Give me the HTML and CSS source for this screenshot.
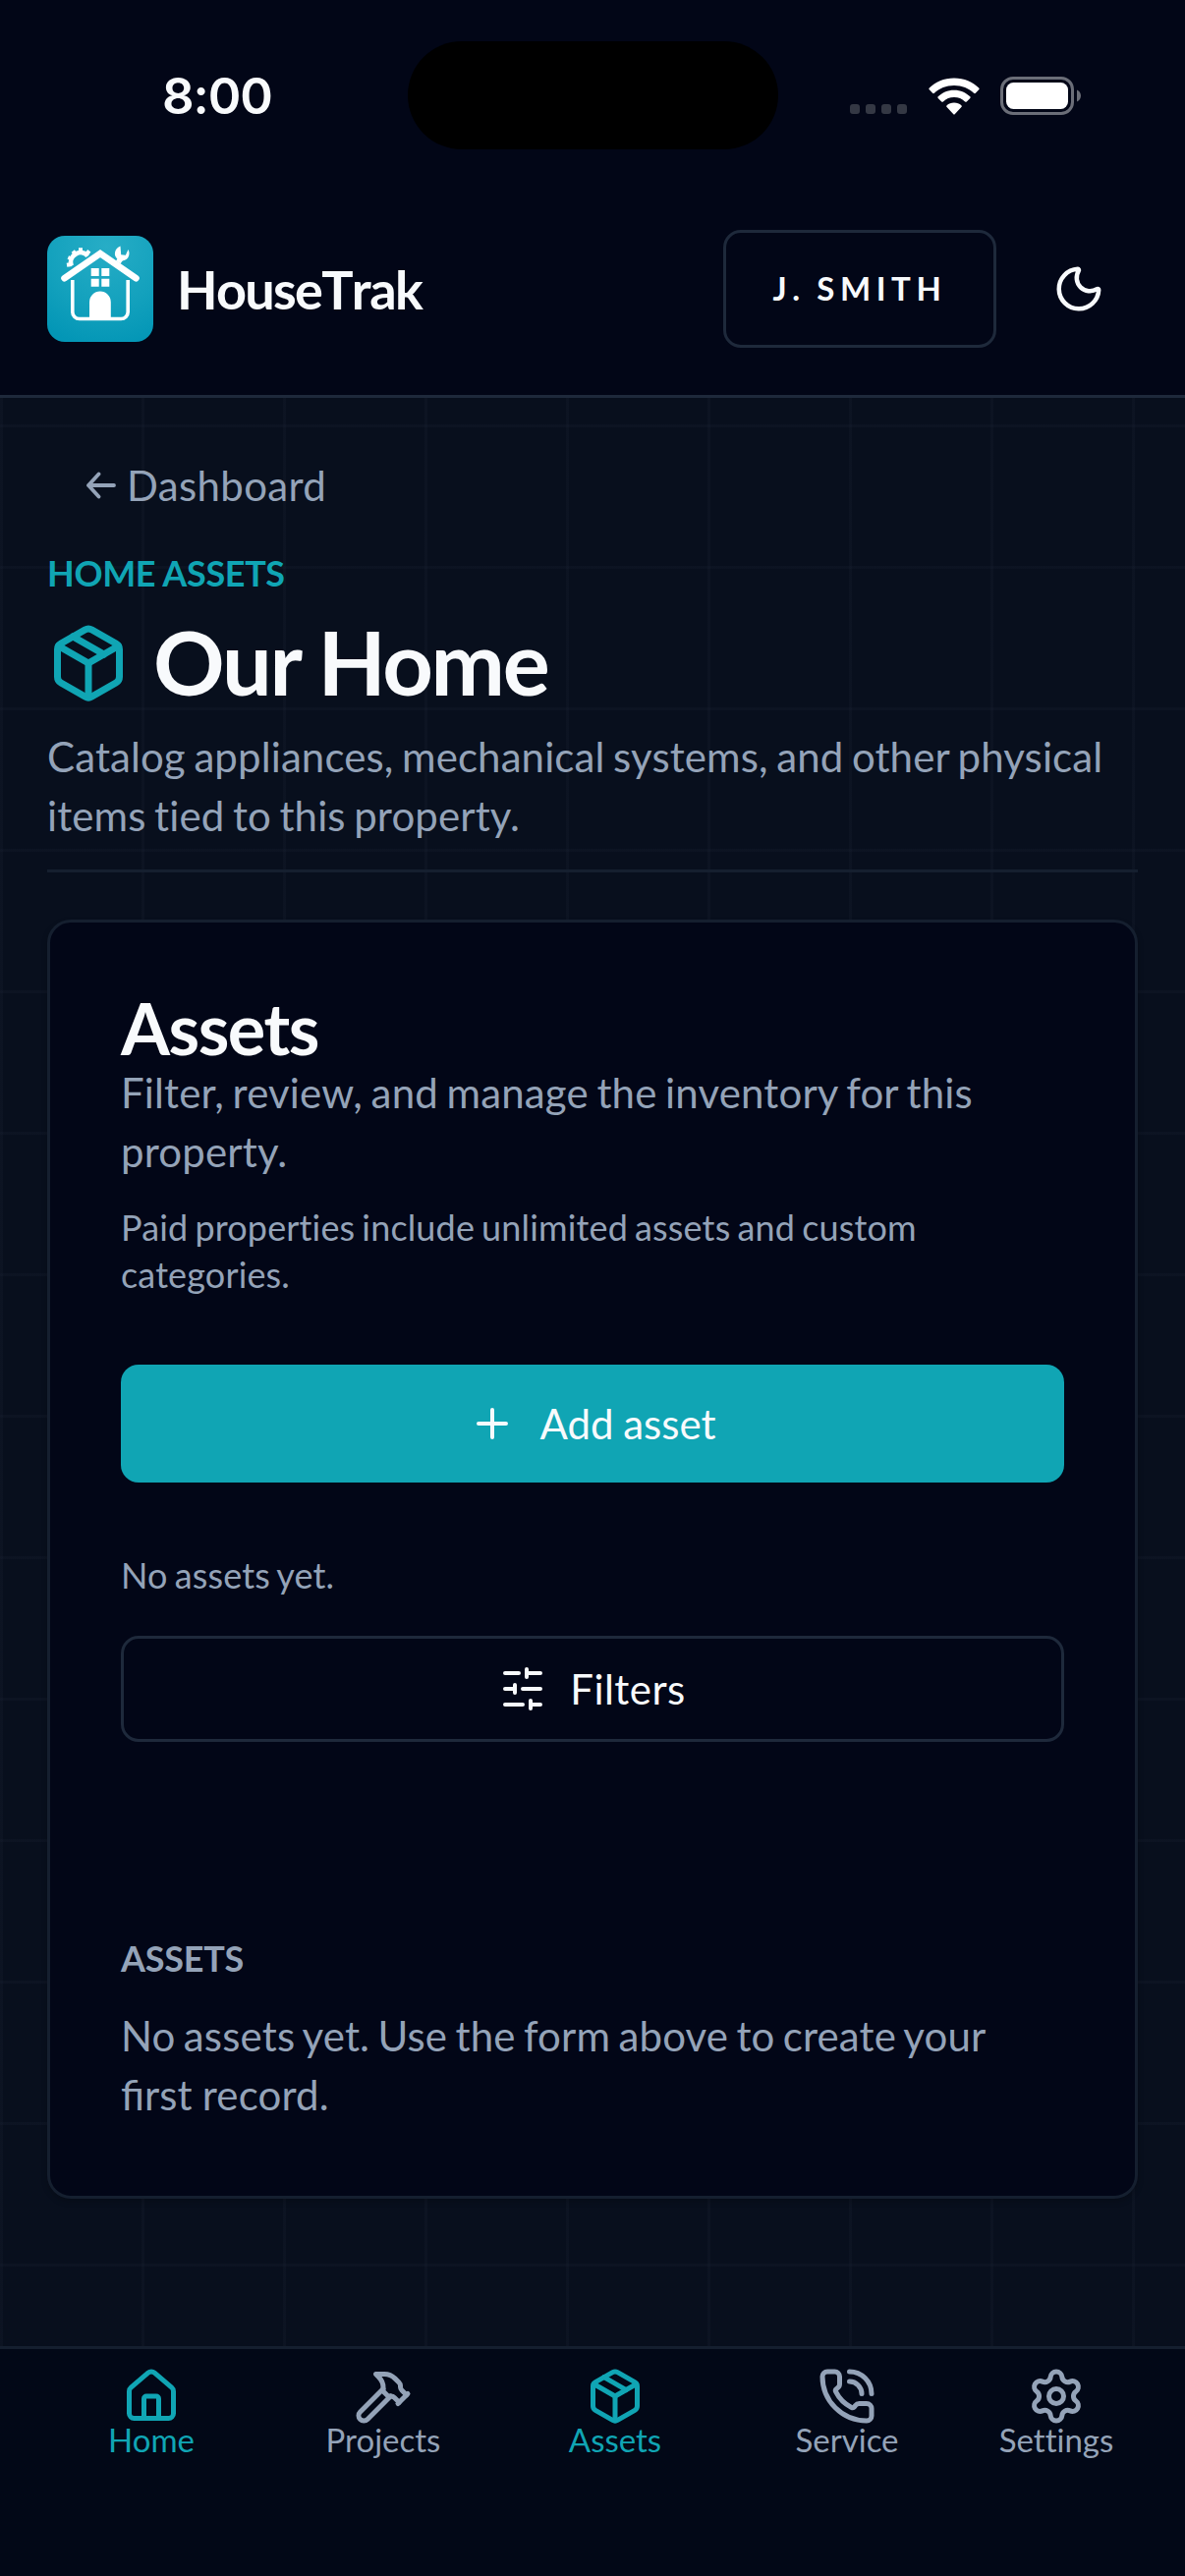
FILE: index.html
```html
<!DOCTYPE html>
<html lang="en">
<head>
<meta charset="utf-8">
<title>HouseTrak – Our Home</title>
<link rel="stylesheet" href="styles.css">
</head>
<body>
<div class="app">
  <header class="top">
    <div class="status">
      <span class="time">8:00</span>
      <span class="island"></span>
      <div class="indicators">
        <span class="dots"><i></i><i></i><i></i><i></i></span>
        <svg class="wifi" width="52" height="38" viewBox="0 0 52 38" fill="#fff">
          <path d="M26 .5C36.200 .5 45.500 4.500 51.200 10.600a1.200 1.200 0 0 1 0 1.700l-3.300 3.400a1.300 1.300 0 0 1-1.800 0C41 10.700 34 7.900 26 7.900S11 10.700 5.900 15.700a1.300 1.300 0 0 1-1.800 0L.8 12.300a1.200 1.200 0 0 1 0-1.700C6.500 4.500 15.800 .5 26 .5Z"/>
          <path d="M26 12.700c6.600 0 12.300 2.600 16.300 6.600a1.200 1.200 0 0 1 0 1.700l-3.500 3.500a1.300 1.300 0 0 1-1.700 0A16 16 0 0 0 26 20.100a16 16 0 0 0-11.100 4.400 1.300 1.300 0 0 1-1.700 0L9.700 21a1.200 1.200 0 0 1 0-1.700C13.700 15.300 19.400 12.700 26 12.700Z"/>
          <path d="M26 25.500c2.900 0 5.500 1.100 7.400 2.700a1.200 1.200 0 0 1 0 1.800l-6.500 6.900a1.200 1.200 0 0 1-1.800 0L18.600 30a1.200 1.200 0 0 1 0-1.800c1.900-1.600 4.500-2.700 7.400-2.700Z"/>
        </svg>
        <svg class="battery" width="83" height="39" viewBox="0 0 83 39">
          <rect x="1.500" y="1.500" width="72" height="36" rx="11.500" fill="none" stroke="#6b6e78" stroke-width="3"/>
          <rect x="6" y="6" width="63" height="27" rx="7.500" fill="#fff"/>
          <path d="M78 13.500c2.300.9 4 3.200 4 6s-1.700 5.100-4 6Z" fill="#6b6e78"/>
        </svg>
      </div>
    </div>
    <div class="bar">
      <div class="brand">
        <svg class="logo" viewBox="0 0 108 108">
          <defs>
            <radialGradient id="tile" cx="0.56" cy="0.1" r="0.95">
              <stop offset="0" stop-color="#27adc6"/>
              <stop offset="0.6" stop-color="#13a1bd"/>
              <stop offset="1" stop-color="#0396b6"/>
            </radialGradient>
          </defs>
          <rect width="108" height="108" rx="18" fill="url(#tile)"/>
          <g fill="none" stroke="#fff">
            <path d="M17.500 43.200 54 18l36.500 25.200" stroke-width="6.600" stroke-linecap="round"/>
            <path d="M25.800 45v32.500a7 7 0 0 0 7 7h42.400a7 7 0 0 0 7-7V45" stroke-width="3.600"/>
            <path d="M24.600 30.500A10 10 0 0 1 41.300 20.300" stroke-width="4.800"/>
            <path d="M20 29.800l5-.8M21.300 22l5 2M26.300 15.500l3.200 4.500M34 12.300v5M42.800 15.300l-3.300 4.500" stroke-width="4"/>
            <path d="M76 21.500l-3.700 5.500" stroke-width="5.500"/>
          </g>
          <path d="M74.500 10.500c-4.500 1.700-6.800 6.500-5 10.600 1.400 3.400 5.800 5.400 9 4 4.300-1.300 6.400-6.400 4-11.100l-2.700 5.700-4.600-.4Z" fill="#fff"/>
          <path d="M44.700 33h8v8h-8zM55.300 33h8v8h-8zM44.700 43.700h8v8h-8zM55.300 43.700h8v8h-8zM43 85V67.500a10.900 11 0 0 1 21.800 0V85Z" fill="#fff"/>
        </svg>
        <span class="brand-name">HouseTrak</span>
      </div>
      <div class="actions">
        <button class="user">J. SMITH</button>
        <button class="theme" aria-label="Theme"><svg class="ico i54" viewBox="0 0 24 24"><path d="M20.985 12.486a9 9 0 1 1-9.473-9.472c.405-.022.617.46.402.803a6 6 0 0 0 8.268 8.268c.344-.215.825-.004.803.401"/></svg></button>
      </div>
    </div>
  </header>

  <main class="main">
    <a class="back">
      <svg width="32" height="28" viewBox="0 0 32 28" class="arrow"><path d="M29 14H3M13.500 2.500 3 14l10.500 11.500"/></svg>
      <span>Dashboard</span>
    </a>
    <div class="page-head">
      <p class="eyebrow">HOME ASSETS</p>
      <div class="title-row">
        <svg class="ico i84" viewBox="0 0 24 24"><use href="#pkg"/></svg>
        <h1>Our Home</h1>
      </div>
      <p class="lead">Catalog appliances, mechanical systems, and other physical items tied to this property.</p>
    </div>
    <section class="card">
      <h2>Assets</h2>
      <p class="body">Filter, review, and manage the inventory for this property.</p>
      <p class="note">Paid properties include unlimited assets and custom categories.</p>
      <button class="btn primary"><svg class="ico i48" viewBox="0 0 24 24"><path d="M5 12h14M12 5v14"/></svg><span>Add asset</span></button>
      <p class="count">No assets yet.</p>
      <button class="btn outline"><svg class="ico i48" viewBox="0 0 24 24"><path d="M21 4h-7M10 4H3M21 12h-9M8 12H3M21 20h-5M12 20H3M14 2v4M8 10v4M16 18v4"/></svg><span>Filters</span></button>
      <h3>ASSETS</h3>
      <p class="body empty">No assets yet. Use the form above to create your <span class="liga">first</span> record.</p>
    </section>
  </main>

  <nav class="tabs">
    <a class="tab on"><svg class="ico i60" viewBox="0 0 24 24"><path d="M15 21v-8a1 1 0 0 0-1-1h-4a1 1 0 0 0-1 1v8"/><path d="M3 10a2 2 0 0 1 .709-1.528l7-5.999a2 2 0 0 1 2.582 0l7 5.999A2 2 0 0 1 21 10v9a2 2 0 0 1-2 2H5a2 2 0 0 1-2-2z"/></svg><span>Home</span></a>
    <a class="tab"><svg class="ico i60" viewBox="0 0 24 24"><path d="m15 12-9.373 9.373a1 1 0 0 1-3.001-3L12 9"/><path d="m18 15 4-4"/><path d="m21.500 11.500-1.914-1.914A2 2 0 0 1 19 8.172v-.344a2 2 0 0 0-.586-1.414l-1.657-1.657A6 6 0 0 0 12.516 3H9l1.243 1.243A6 6 0 0 1 12 8.485V10l2 2h1.172a2 2 0 0 1 1.414.586L18.500 14.500"/></svg><span>Projects</span></a>
    <a class="tab on"><svg class="ico i60" viewBox="0 0 24 24"><g id="pkg"><path d="M11 21.730a2 2 0 0 0 2 0l7-4A2 2 0 0 0 21 16V8a2 2 0 0 0-1-1.730l-7-4a2 2 0 0 0-2 0l-7 4A2 2 0 0 0 3 8v8a2 2 0 0 0 1 1.730z"/><path d="M12 22V12"/><path d="M3.290 7 12 12l8.710-5"/><path d="m7.500 4.270 9 5.150"/></g></svg><span>Assets</span></a>
    <a class="tab"><svg class="ico i60" viewBox="0 0 24 24"><path d="M13 2a9 9 0 0 1 9 9"/><path d="M13 6a5 5 0 0 1 5 5"/><path d="M13.832 16.568a1 1 0 0 0 1.213-.303l.355-.465A2 2 0 0 1 17 15h3a2 2 0 0 1 2 2v3a2 2 0 0 1-2 2A18 18 0 0 1 2 4a2 2 0 0 1 2-2h3a2 2 0 0 1 2 2v3a2 2 0 0 1-.8 1.600l-.468.351a1 1 0 0 0-.292 1.233 14 14 0 0 0 6.392 6.384"/></svg><span>Service</span></a>
    <a class="tab"><svg class="ico i60" viewBox="0 0 24 24"><path d="M9.671 4.136a2.340 2.340 0 0 1 4.659 0 2.340 2.340 0 0 0 3.319 1.915 2.340 2.340 0 0 1 2.330 4.033 2.340 2.340 0 0 0 0 3.831 2.340 2.340 0 0 1-2.330 4.033 2.340 2.340 0 0 0-3.319 1.915 2.340 2.340 0 0 1-4.659 0 2.340 2.340 0 0 0-3.320-1.915 2.340 2.340 0 0 1-2.330-4.033 2.340 2.340 0 0 0 0-3.831A2.340 2.340 0 0 1 6.350 6.051a2.340 2.340 0 0 0 3.319-1.915"/><circle cx="12" cy="12" r="3"/></svg><span>Settings</span></a>
  </nav>
</div>
</body>
</html>
```
FILE: styles.css
```css
* { box-sizing: border-box; margin: 0; padding: 0; }
:root {
  --bg: #020617;
  --fg: #f8fafc;
  --muted: #94a3b8;
  --line: #1e293b;
  --line-soft: #151f2f;
  --teal: #10a5b4;
}
body {
  width: 1206px;
  height: 2622px;
  overflow: hidden;
  background: var(--bg);
  color: var(--fg);
  font-family: Lato, "Liberation Sans", sans-serif;
  font-size: 42px;
  line-height: 60px;
  font-variant-ligatures: none;
}
button { font: inherit; color: inherit; background: none; border: 0; }
h1, h2, h3 { font-weight: 700; }
.liga { font-variant-ligatures: common-ligatures; letter-spacing: 0; margin-right: 2px; }

.app {
  display: flex;
  flex-direction: column;
  height: 2622px;
  background-color: #080f1d;
  background-image:
    linear-gradient(to right, rgba(40, 48, 66, .14) 3px, transparent 3px),
    linear-gradient(to bottom, rgba(40, 48, 66, .14) 3px, transparent 3px);
  background-size: 144px 144px;
}

.ico { fill: none; stroke: currentColor; stroke-width: 2; stroke-linecap: round; stroke-linejoin: round; flex: none; display: block; }
.i48 { width: 48px; height: 48px; }
.i54 { width: 54px; height: 54px; }
.i60 { width: 60px; height: 60px; }
.i84 { width: 84px; height: 84px; margin-top: 4px; }

.top { height: 405px; flex: none; background: var(--bg); border-bottom: 3px solid var(--line); }
.status {
  height: 186px;
  padding-top: 42px;
  display: grid;
  grid-template-columns: 415px 377px 1fr;
  grid-template-rows: 110px;
}
.time { font: 600 51px/112px Inter, sans-serif; letter-spacing: -1.100px; padding-left: 165px; }
.island { background: #000; border-radius: 55px; }
.indicators { display: flex; padding-left: 73px; padding-top: 36px; }
.dots { display: flex; gap: 6px; padding-top: 28px; margin-right: 22px; }
.dots i { width: 10px; height: 10px; border-radius: 3px; background: #343844; }
.wifi { margin-top: 1px; margin-right: 21px; }

.bar { display: flex; justify-content: space-between; align-items: center; height: 216px; padding: 0 48px; }
.brand { display: flex; align-items: center; gap: 24px; }
.logo { width: 108px; height: 108px; display: block; }
.brand-name { font-size: 54px; font-weight: 700; letter-spacing: -1.700px; font-kerning: none; padding-top: 2px; }
.actions { display: flex; gap: 24px; }
.user {
  width: 278px;
  height: 120px;
  border: 3px solid var(--line);
  border-radius: 18px;
  font-size: 33px;
  font-weight: 700;
  letter-spacing: 5.600px;
  word-spacing: -2px;
  padding-bottom: 2px;
  white-space: nowrap;
}
.theme { width: 120px; height: 120px; display: flex; align-items: center; justify-content: center; }

.main { flex: 1; padding: 0 48px; }
.back { display: flex; align-items: center; gap: 10px; padding: 59px 0 0 39px; color: var(--muted); letter-spacing: .350px; }
.arrow { fill: none; stroke: currentColor; stroke-width: 3.800; stroke-linecap: round; stroke-linejoin: round; }
.page-head { margin-top: 35px; border-bottom: 3px solid var(--line-soft); padding-bottom: 25px; }
.eyebrow { color: var(--teal); font-size: 36px; line-height: 48px; font-weight: 700; letter-spacing: -.350px; }
.title-row { display: flex; align-items: center; gap: 24px; margin: 12px 0 13px; color: var(--teal); }
h1 { font-size: 90px; line-height: 108px; letter-spacing: -2.250px; color: var(--fg); }
.lead, .body, .note, .count, h3 { color: var(--muted); }
.body, .note, .count { letter-spacing: .150px; word-spacing: -2.300px; }
.lead { letter-spacing: .110px; word-spacing: -2.300px; }
.empty { word-spacing: -2.600px; }

.card {
  margin-top: 48px;
  height: 1302px;
  padding: 72px;
  background: var(--bg);
  border: 3px solid var(--line-soft);
  border-radius: 24px;
  box-shadow: 0 3px 6px rgba(0, 0, 0, .2);
}
h2 { font-size: 72px; line-height: 71px; letter-spacing: -1.500px; }
.note, .count { font-size: 36px; line-height: 48px; }
.note { margin-top: 23px; }
.btn { width: 100%; display: flex; align-items: center; justify-content: center; gap: 24px; border-radius: 18px; }
.primary { height: 120px; margin-top: 68px; background: var(--teal); word-spacing: -1px; }
.count { margin: 70px 0 38px; }
.outline { height: 108px; border: 3px solid var(--line); letter-spacing: .450px; }
h3 { font-size: 36px; line-height: 48px; margin: 196px 0 25px; letter-spacing: -.250px; }

.tabs {
  height: 234px;
  flex: none;
  display: grid;
  grid-template-columns: repeat(4, 236px) 190px;
  padding: 18px 36px 0;
  background: #020817;
  border-top: 3px solid var(--line-soft);
}
.tab { display: flex; flex-direction: column; align-items: center; font-size: 33px; line-height: 29px; color: var(--muted); }
.tab.on { color: var(--teal); }
```
